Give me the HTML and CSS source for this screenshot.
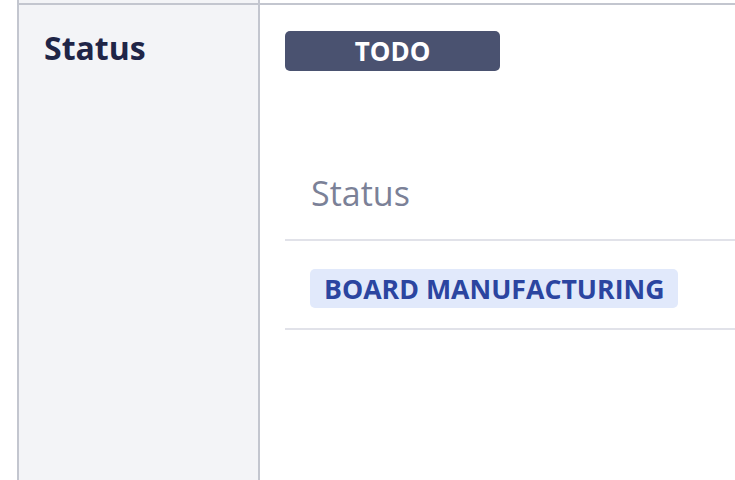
FILE: index.html
```html
<!doctype html>
<html>
<head>
<meta charset="utf-8">
<title>Status</title>
<link rel="stylesheet" href="styles.css">
</head>
<body>

<div class="table">
  <div class="row row-prev">
    <div class="head"></div>
    <div class="cell"></div>
  </div>

  <div class="row">
    <div class="head">Status</div>
    <div class="cell">
      <span class="badge badge-todo">TODO</span>

      <table class="sub">
        <thead>
          <tr><th>Status</th></tr>
        </thead>
        <tbody>
          <tr><td><span class="tag">BOARD MANUFACTURING</span></td></tr>
        </tbody>
      </table>
    </div>
  </div>
</div>

</body>
</html>
```

FILE: styles.css
```css
body {
  margin: 0 ;
  background-color: #ffffff ;
  font-family: "Open Sans", "Noto Sans", Arial, sans-serif ;
  overflow: hidden ;
  height: 480px ;
}

.table {
  margin-left: 17px ;
}

.row {
  display: grid ;
  grid-template-columns: 243px 1fr ;
  border-top: 2px solid #c3c6cf ;
}

.row-prev {
  border-top: 0 ;
  height: 3px ;
}

.head {
  background-color: #f3f4f7 ;
  border-left: 2px solid #c3c6cf ;
  border-right: 2px solid #c3c6cf ;
  color: #1f2547 ;
  font-size: 32px ;
  font-weight: 700 ;
  padding: 21px 0 0 25px ;
  height: 460px ;
}

.row-prev .head {
  height: 3px ;
  padding: 0 ;
}

.cell {
  padding: 26px 0 0 25px ;
}

.badge {
  display: block ;
  width: 215px ;
  height: 40px ;
  line-height: 40px ;
  border-radius: 5px ;
  text-align: center ;
  font-size: 26px ;
  font-weight: 700 ;
}

.badge-todo {
  background-color: #4a5270 ;
  color: #ffffff ;
}

table.sub {
  margin-top: 99px ;
  border-collapse: collapse ;
  width: 100% ;
}

table.sub th {
  text-align: left ;
  font-weight: 400 ;
  font-size: 34px ;
  color: #7b8197 ;
  padding: 0 0 23px 26px ;
  border-bottom: 2px solid #e1e2e9 ;
}

table.sub td {
  padding: 28px 0 20px 25px ;
  border-bottom: 2px solid #e1e2e9 ;
}

.tag {
  display: inline-block ;
  vertical-align: top ;
  background-color: #e1e9fb ;
  color: #2b45a0 ;
  border-radius: 5px ;
  font-size: 26.7px ;
  font-weight: 700 ;
  height: 39px ;
  line-height: 39px ;
  padding: 0 13px 0 14px ;
}
```
